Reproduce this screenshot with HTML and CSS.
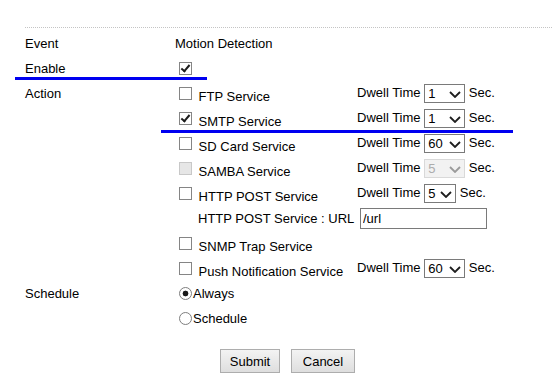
FILE: index.html
```html
<!DOCTYPE html>
<html lang="en">

<head>
    <meta charset="UTF-8">
    <meta name="viewport" content="width=device-width, initial-scale=1.0">
    <title>Event Setting</title>
    <link rel="stylesheet" href="styles.css">
</head>

<body>
    <form class="event-form">
        <div class="row">
            <div class="label">Event</div>
            <div class="value">Motion Detection</div>
        </div>
        <div class="row">
            <div class="label">Enable</div>
            <div class="value"><input type="checkbox" checked></div>
        </div>
        <div class="row tall">
            <div class="label">Action</div>
            <div class="services">
                <div class="svc">
                    <label class="svc-name"><input type="checkbox"> FTP Service</label>
                    <span class="dwell">Dwell Time <span class="sel"><select><option>1</option></select><svg class="chev" width="12" height="7" viewBox="0 0 12 7"><polyline points="1,1 6,6 11,1" /></svg></span> Sec.</span>
                </div>
                <div class="svc">
                    <label class="svc-name"><input type="checkbox" checked> SMTP Service</label>
                    <span class="dwell">Dwell Time <span class="sel"><select><option>1</option></select><svg class="chev" width="12" height="7" viewBox="0 0 12 7"><polyline points="1,1 6,6 11,1" /></svg></span> Sec.</span>
                </div>
                <div class="svc">
                    <label class="svc-name"><input type="checkbox"> SD Card Service</label>
                    <span class="dwell">Dwell Time <span class="sel"><select><option>60</option></select><svg class="chev" width="12" height="7" viewBox="0 0 12 7"><polyline points="1,1 6,6 11,1" /></svg></span> Sec.</span>
                </div>
                <div class="svc">
                    <label class="svc-name"><input type="checkbox" disabled> SAMBA Service</label>
                    <span class="dwell">Dwell Time <span class="sel off"><select disabled><option>5</option></select><svg class="chev" width="12" height="7" viewBox="0 0 12 7"><polyline points="1,1 6,6 11,1" /></svg></span> Sec.</span>
                </div>
                <div class="svc">
                    <label class="svc-name"><input type="checkbox"> HTTP POST Service</label>
                    <span class="dwell">Dwell Time <span class="sel narrow"><select><option>5</option></select><svg class="chev" width="12" height="7" viewBox="0 0 12 7"><polyline points="1,1 6,6 11,1" /></svg></span> Sec.</span>
                </div>
                <div class="svc">
                    <span class="svc-name sub">HTTP POST Service : URL</span>
                    <span class="dwell"><input type="text" class="url" value="/url"></span>
                </div>
                <div class="svc">
                    <label class="svc-name"><input type="checkbox"> SNMP Trap Service</label>
                </div>
                <div class="svc">
                    <label class="svc-name"><input type="checkbox"> Push Notification Service</label>
                    <span class="dwell">Dwell Time <span class="sel"><select><option>60</option></select><svg class="chev" width="12" height="7" viewBox="0 0 12 7"><polyline points="1,1 6,6 11,1" /></svg></span> Sec.</span>
                </div>
            </div>
        </div>
        <div class="row tall">
            <div class="label">Schedule</div>
            <div class="services">
                <div class="svc"><label><input type="radio" name="sched" checked>Always</label></div>
                <div class="svc"><label><input type="radio" name="sched">Schedule</label></div>
            </div>
        </div>
        <div class="actions">
            <button type="button" class="btn-submit">Submit</button>
            <button type="button" class="btn-cancel">Cancel</button>
        </div>
    </form>

    <!-- 표시선 -->
    <div class="mark mark-enable"></div>
    <div class="mark mark-smtp"></div>
</body>
</html>
```

FILE: styles.css
```css
body {
    font-family: 'Liberation Sans', Arial, sans-serif;
    font-size: 13px;
    color: #000;
    background-color: #fff;
    margin: 0;
    padding: 0;
    overflow: hidden;
}

.event-form {
    margin: 27px 0 0 25px;
    padding-top: 3px;
    border-top: 1px dotted #c4c4c4;
}

.row {
    display: flex;
    align-items: center;
    height: 25px;
}

.row.tall {
    height: auto;
    align-items: flex-start;
}

.row.tall .label {
    height: 25px;
    line-height: 25px;
}

.label {
    width: 150px;
}

.services {
    display: flex;
    flex-direction: column;
}

.svc {
    display: flex;
    align-items: center;
    height: 25px;
}

.svc-name {
    width: 182px;
}

.svc-name.sub {
    box-sizing: border-box;
    padding-left: 23px;
}

.dwell {
    white-space: nowrap;
}

input[type="checkbox"] {
    appearance: none;
    -webkit-appearance: none;
    position: relative;
    width: 13px;
    height: 13px;
    margin: 3px 3px 3px 4px;
    border: 1px solid #858585;
    background-color: #fff;
    box-sizing: border-box;
    vertical-align: -2px;
}

input[type="checkbox"]:checked::after {
    content: '';
    position: absolute;
    left: 3px;
    top: 0;
    width: 3px;
    height: 7px;
    border: solid #1c1c1c;
    border-width: 0 2px 2px 0;
    transform: rotate(40deg);
}

input[type="checkbox"]:disabled {
    background-color: #e6e6e6;
    border-color: #c8c8c8;
}

input[type="radio"] {
    appearance: none;
    -webkit-appearance: none;
    width: 13px;
    height: 13px;
    margin: 0 1px 0 4px;
    border: 1px solid #7e7e7e;
    border-radius: 50%;
    background-color: #fff;
    box-sizing: border-box;
    vertical-align: -2px;
}

input[type="radio"]:checked {
    background: radial-gradient(circle, #1a1a1a 0 2.6px, #fff 3.2px);
}

.sel {
    position: relative;
    display: inline-block;
    vertical-align: middle;
}

.sel select {
    appearance: none;
    -webkit-appearance: none;
    width: 41px;
    height: 19px;
    margin: 0;
    padding: 0 0 0 3px;
    border: 1px solid #7a7a7a;
    border-radius: 0;
    background-color: #fff;
    font-family: inherit;
    font-size: 13px;
    color: #000;
    display: block;
}

.sel.narrow select {
    width: 32px;
}

.chev {
    position: absolute;
    right: 4px;
    top: 7px;
    fill: none;
    stroke: #1e1e1e;
    stroke-width: 1.8;
}

.sel.off select {
    background-color: #ededed;
    border-color: #c9c9c9;
    color: #8a8a8a;
}

.sel.off .chev {
    stroke: #9a9a9a;
}

.url {
    width: 127px;
    height: 21px;
    margin: 0 0 0 3px;
    padding: 0 2px;
    border: 1px solid #7a7a7a;
    box-sizing: border-box;
    font-family: inherit;
    font-size: 13px;
    color: #000;
    vertical-align: middle;
}

.actions {
    display: flex;
    justify-content: center;
    gap: 11px;
    margin-top: 18px;
    padding-right: 2px;
}

.actions button {
    height: 24px;
    padding: 0;
    border: 1px solid #adadad;
    background: linear-gradient(#f3f3f3, #dedede);
    font-family: inherit;
    font-size: 13px;
    color: #000;
}

.btn-submit {
    width: 60px;
}

.btn-cancel {
    width: 64px;
}

.mark {
    position: absolute;
    height: 3px;
    background-color: #0000f0;
}

.mark-enable {
    left: 15px;
    top: 77px;
    width: 192px;
}

.mark-smtp {
    left: 161px;
    top: 130px;
    width: 352px;
}
```
